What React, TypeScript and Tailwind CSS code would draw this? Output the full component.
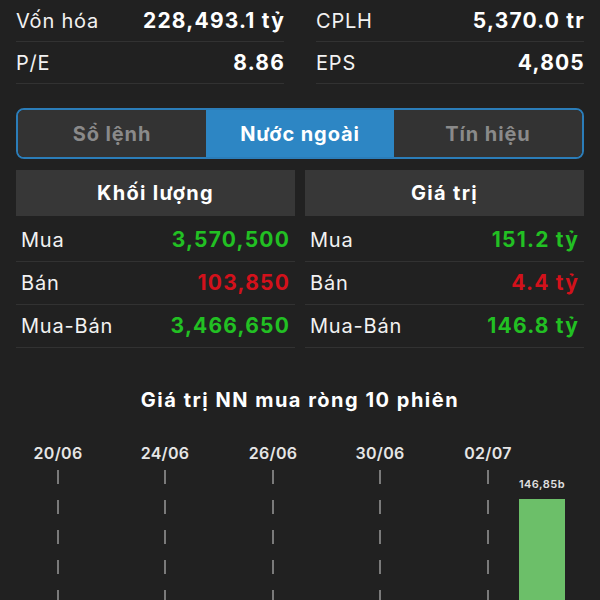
import React from 'react';

interface Stat {
  label: string;
  value: string;
}

interface FlowRow {
  label: string;
  value: string;
  tone: 'up' | 'down';
}

const stats: Stat[][] = [
  [
    { label: 'Vốn hóa', value: '228,493.1 tỷ' },
    { label: 'P/E', value: '8.86' },
  ],
  [
    { label: 'CPLH', value: '5,370.0 tr' },
    { label: 'EPS', value: '4,805' },
  ],
];

const tabs = ['Sổ lệnh', 'Nước ngoài', 'Tín hiệu'];

const tables: { title: string; rows: FlowRow[] }[] = [
  {
    title: 'Khối lượng',
    rows: [
      { label: 'Mua', value: '3,570,500', tone: 'up' },
      { label: 'Bán', value: '103,850', tone: 'down' },
      { label: 'Mua-Bán', value: '3,466,650', tone: 'up' },
    ],
  },
  {
    title: 'Giá trị',
    rows: [
      { label: 'Mua', value: '151.2 tỷ', tone: 'up' },
      { label: 'Bán', value: '4.4 tỷ', tone: 'down' },
      { label: 'Mua-Bán', value: '146.8 tỷ', tone: 'up' },
    ],
  },
];

const dates = [
  { label: '20/06', x: 58 },
  { label: '24/06', x: 165 },
  { label: '26/06', x: 273 },
  { label: '30/06', x: 380 },
  { label: '02/07', x: 488 },
];

const App: React.FC = () => {
  return (
    <div
      className="h-[600px] w-[600px] overflow-hidden bg-[#212121] text-white"
      style={{ fontFamily: 'Inter, "Noto Sans", sans-serif' }}
    >
      {/* stats */}
      <div className="grid grid-cols-2 gap-x-8 px-4">
        {stats.map((col, ci) => (
          <div key={ci}>
            {col.map((s) => (
              <div
                key={s.label}
                className="flex h-[42px] items-center justify-between border-b border-[#323232]"
              >
                <span className="text-[20px] tracking-[0.8px] text-[#f2f2f2]">
                  {s.label}
                </span>
                <span className="mr-[-1px] text-[21px] font-bold tracking-[1.2px]">
                  {s.value}
                </span>
              </div>
            ))}
          </div>
        ))}
      </div>

      {/* tabs */}
      <div className="mx-4 mt-6 flex h-[51px] overflow-hidden rounded-lg border-2 border-[#2b7db9]">
        {tabs.map((t, i) => (
          <div
            key={t}
            className={
              i === 1
                ? 'flex flex-1 items-center justify-center bg-[#2d86c4] text-[20px] font-bold tracking-[0.9px] text-white'
                : 'flex flex-1 items-center justify-center bg-[#333333] text-[20px] font-bold tracking-[0.9px] text-[#8a8a8a]'
            }
          >
            {t}
          </div>
        ))}
      </div>

      {/* foreign flow tables */}
      <div className="mt-[11px] grid grid-cols-2 gap-[10px] px-4">
        {tables.map((tb) => (
          <div key={tb.title}>
            <div className="flex h-[46px] items-center justify-center bg-[#373737] text-[20px] font-bold tracking-[1.3px]">
              {tb.title}
            </div>
            <div className="mt-[3px]">
              {tb.rows.map((r) => (
                <div
                  key={r.label}
                  className="flex h-[43px] items-center justify-between border-b border-[#323232] pl-[5px] pr-[5px]"
                >
                  <span className="text-[20px] tracking-[0.8px] text-[#f2f2f2]">
                    {r.label}
                  </span>
                  <span
                    className={
                      r.tone === 'up'
                        ? 'text-[21px] font-bold tracking-[1.2px] text-[#22c023]'
                        : 'text-[21px] font-bold tracking-[1.2px] text-[#d3111b]'
                    }
                  >
                    {r.value}
                  </span>
                </div>
              ))}
            </div>
          </div>
        ))}
      </div>

      {/* chart */}
      <div className="mt-[37px] text-center text-[20px] font-bold tracking-[1.5px]">
        Giá trị NN mua ròng 10 phiên
      </div>
      <div className="relative mt-[17px] h-[170px] w-full">
        <svg
          className="absolute inset-0"
          width="600"
          height="170"
          viewBox="0 0 600 170"
        >
          {dates.map((d) => (
            <line
              key={d.label}
              x1={d.x}
              x2={d.x}
              y1={38}
              y2={170}
              stroke="#7a7a7a"
              strokeWidth={2}
              strokeDasharray="14 16"
            />
          ))}
          <rect x={519} y={67} width={46} height={110} fill="#6cbf69" />
        </svg>
        {dates.map((d) => (
          <span
            key={d.label}
            className="absolute top-[9px] -translate-x-1/2 text-[16px] font-semibold tracking-[0.3px] text-[#e6e6e6]"
            style={{ left: d.x }}
          >
            {d.label}
          </span>
        ))}
        <span
          className="absolute top-[44px] -translate-x-1/2 text-[11px] font-semibold tracking-[0.5px] text-[#e0e0e0]"
          style={{ left: 542 }}
        >
          146,85b
        </span>
      </div>
    </div>
  );
};

export default App;
